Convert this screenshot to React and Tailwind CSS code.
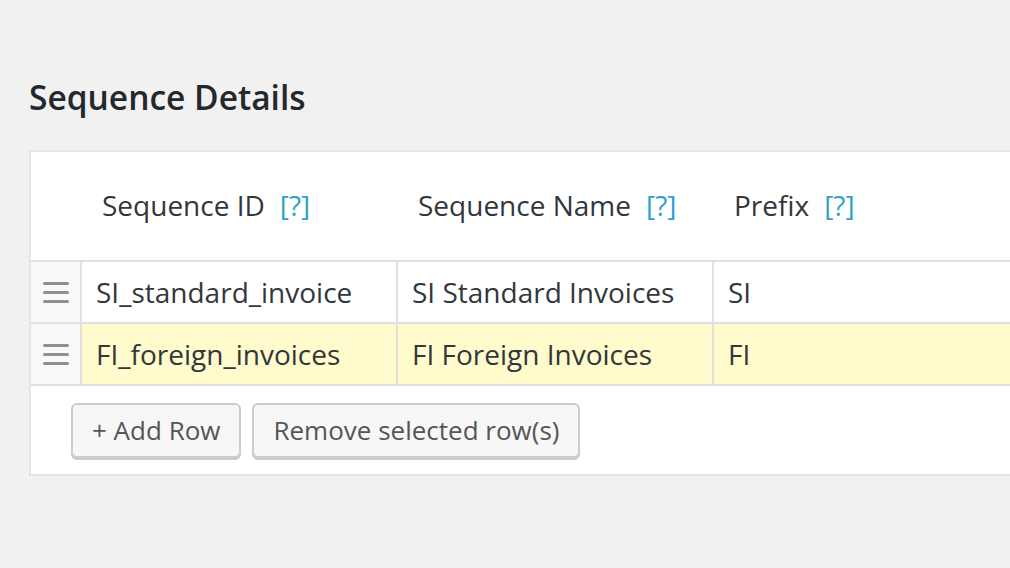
const columns = [
  { key: 'id', label: 'Sequence ID' },
  { key: 'name', label: 'Sequence Name' },
  { key: 'prefix', label: 'Prefix' },
];

const rows = [
  { id: 'SI_standard_invoice', name: 'SI Standard Invoices', prefix: 'SI', selected: false },
  { id: 'FI_foreign_invoices', name: 'FI Foreign Invoices', prefix: 'FI', selected: true },
];

const DragHandle = () => (
  <div className="flex flex-col gap-[6px] w-[26px]">
    <span className="block h-[3px] rounded-full bg-[#8f8f8f]" />
    <span className="block h-[3px] rounded-full bg-[#8f8f8f]" />
    <span className="block h-[3px] rounded-full bg-[#8f8f8f]" />
  </div>
);

const Row = ({ row }) => {
  const bg = row.selected ? 'bg-[#fffbcc]' : 'bg-white';
  return (
    <div className="flex h-[62px] border-b-2 border-[#e1e1e1]">
      <div className="w-[51px] shrink-0 flex items-center justify-center bg-[#f9f9f9] border-r-2 border-[#e1e1e1]">
        <DragHandle />
      </div>
      <div className={`w-[316px] shrink-0 flex items-center pl-[14px] border-r-2 border-[#e1e1e1] ${bg}`}>
        {row.id}
      </div>
      <div className={`w-[316px] shrink-0 flex items-center pl-[14px] border-r-2 border-[#e1e1e1] ${bg}`}>
        {row.name}
      </div>
      <div className={`flex-1 flex items-center pl-[14px] ${bg}`}>{row.prefix}</div>
    </div>
  );
};

export default function App() {
  return (
    <div
      className="min-h-[568px] w-[1010px] overflow-hidden bg-[#f1f1f1] pl-[29px] pt-[77px]"
      style={{ fontFamily: '"Open Sans", "Noto Sans", sans-serif' }}
    >
      <h2 className="text-[33.5px] leading-[40px] font-semibold text-[#23282d]">Sequence Details</h2>

      <div className="mt-[33px] w-[1040px] bg-white border-2 border-[#e5e5e5] text-[28px] text-[#32373c]">
        {/* header */}
        <div className="flex h-[110px] border-b-2 border-[#e1e1e1]">
          <div className="w-[51px] shrink-0" />
          {columns.map((col, i) => (
            <div
              key={col.key}
              className={`${i < 2 ? 'w-[316px] shrink-0' : 'flex-1'} flex items-center pl-[20px] pb-[2px]`}
            >
              <span>{col.label}</span>
              <span className="ml-[15px] text-[#2ea2cc]">[?]</span>
            </div>
          ))}
        </div>

        {rows.map((row) => (
          <Row key={row.id} row={row} />
        ))}

        {/* footer */}
        <div className="flex gap-[11px] pl-[40px] pt-[17px] pb-[16px]">
          <button className="h-[55px] px-[19px] text-[26px] text-[#555] bg-[#f7f7f7] border-2 border-[#cccccc] rounded-[6px] shadow-[0_2px_0_#cccccc]">
            + Add Row
          </button>
          <button className="h-[55px] px-[19px] text-[26px] text-[#555] bg-[#f7f7f7] border-2 border-[#cccccc] rounded-[6px] shadow-[0_2px_0_#cccccc]">
            Remove selected row(s)
          </button>
        </div>
      </div>
    </div>
  );
}
